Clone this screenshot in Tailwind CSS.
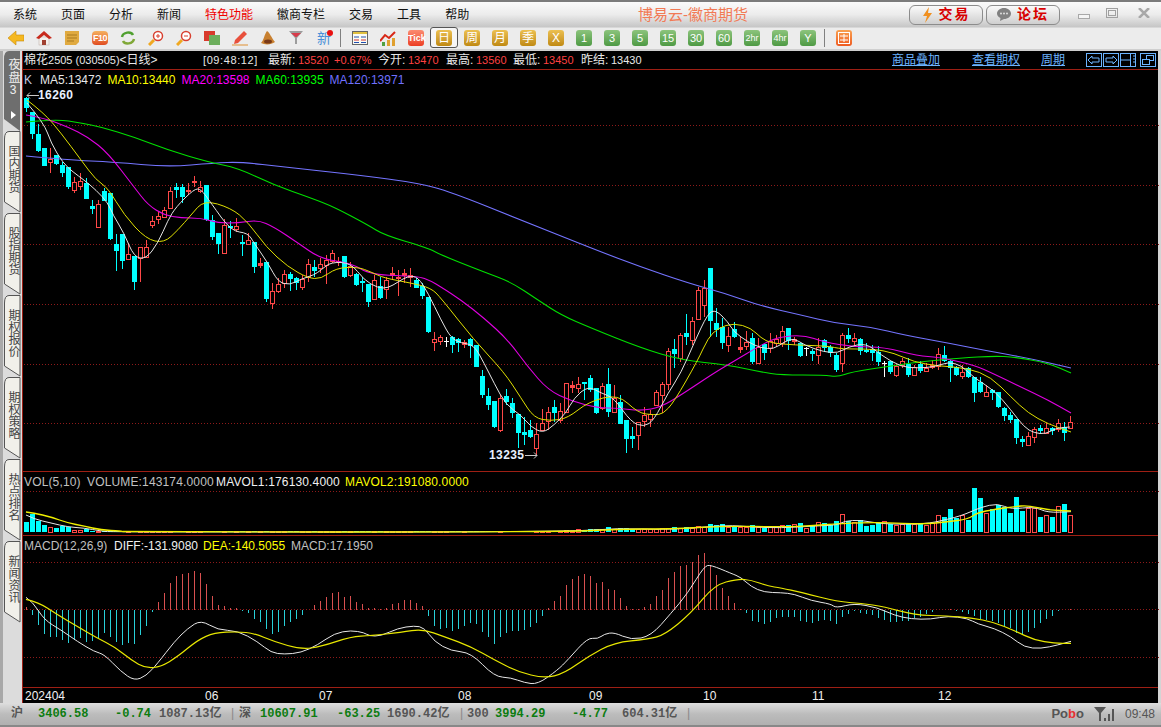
<!DOCTYPE html>
<html lang="zh-CN">
<head>
    <meta charset="UTF-8">
    <title>博易云-徽商期货</title>
    <script src="https://cdn.jsdelivr.net/npm/@tailwindcss/browser@4"></script>
</head>
<body class="h-screen overflow-hidden flex flex-col bg-[#d4d4d4] text-xs text-[#222] [font-family:'Liberation_Sans','Noto_Sans_CJK_SC',sans-serif]">

    <!-- Menu bar -->
    <div class="h-[27px] shrink-0 flex items-center border-t-2 border-[#7c7c7c] pl-[13px] bg-gradient-to-b from-[#fbfbfb] via-[#ececec] to-[#c6c6c6]">
        <div class="flex gap-[24px] w-[457px] text-[#111]">
            <span>系统</span><span>页面</span><span>分析</span><span>新闻</span>
            <span class="text-[#f00000]">特色功能</span>
            <span>徽商专栏</span><span>交易</span><span>工具</span><span>帮助</span>
        </div>
        <div class="ml-[168px] w-[271px] text-[15px] text-[#f27a55]">博易云-徽商期货</div>
        <button class="w-[74px] h-[20px] flex items-center justify-center gap-[6px] rounded-md border border-[#8c8c8c] bg-gradient-to-b from-[#fafafa] to-[#cfcfcf] text-[14px] font-bold text-[#d80000] tracking-[2px]">
            <svg class="w-[11px] h-[16px]" viewBox="0 0 11 16"><path d="M7 0 L1 9 H5 L3 16 L10 6 H6 Z" fill="#f09020"/></svg>交易
        </button>
        <button class="ml-[3px] w-[74px] h-[20px] flex items-center justify-center gap-[6px] rounded-md border border-[#8c8c8c] bg-gradient-to-b from-[#fafafa] to-[#cfcfcf] text-[14px] font-bold text-[#d80000] tracking-[2px]">
            <svg class="w-[14px] h-[13px]" viewBox="0 0 14 13"><path d="M7 0 C11 0 14 2.5 14 5.5 C14 8.5 11 11 7 11 L3 13 L3.5 10 C1.5 9 0 7.500 0 5.500 C0 2.500 3 0 7 0 Z" fill="#808080"/><circle cx="4" cy="5.500" r="1" fill="#ddd"/><circle cx="7" cy="5.500" r="1" fill="#ddd"/><circle cx="10" cy="5.500" r="1" fill="#ddd"/></svg>论坛
        </button>
        <div class="ml-[18px] flex items-center gap-[16px] h-full">
            <svg class="w-[12px] h-[6px] mt-[4px]" viewBox="0 0 12 6"><rect x="0.500" y="0.500" width="11" height="4" fill="#f4f4f4" stroke="#a8a8a8"/></svg>
            <svg class="w-[12px] h-[10px] -mt-[4px]" viewBox="0 0 12 10"><rect x="0.500" y="0.500" width="11" height="9" fill="none" stroke="#a0a0a0"/><rect x="2.500" y="2.500" width="7" height="5" fill="none" stroke="#a0a0a0"/></svg>
            <svg class="w-[12px] h-[10px] -mt-[4px] ml-[4px]" viewBox="0 0 12 10"><path d="M1 0 L11 10 M11 0 L1 10" stroke="#a8a8a8" stroke-width="2.500"/></svg>
        </div>
    </div>

    <!-- Toolbar -->
    <div class="h-[24px] shrink-0 flex items-center pl-[2px] pb-[2px] bg-[#ececec] border-t border-[#d8d8d8] border-b-2 border-b-[#cfcfcf]">
        <div class="w-[28px] flex justify-center"><svg class="w-4 h-4" viewBox="0 0 16 16"><path d="M0 8 L8 1 V5 H16 V11 H8 V15 Z" fill="#f5b820" stroke="#c8890c" stroke-width="0.600"/></svg></div>
        <div class="w-[28px] flex justify-center"><svg class="w-4 h-4" viewBox="0 0 16 16"><rect x="3" y="7" width="10" height="8" fill="#f4f0ec" stroke="#b8a8a0" stroke-width="0.500"/><rect x="6" y="10" width="4" height="5" fill="#a04030"/><path d="M0 8 L8 1 L16 8 L13 9 L8 5 L3 9 Z" fill="#c82a1c"/></svg></div>
        <div class="w-[28px] flex justify-center"><svg class="w-4 h-4" viewBox="0 0 16 16"><path d="M1 1 H15 V12 L12 15 H1 Z" fill="#e0aa40"/><path d="M3 5 H13 M3 8 H13 M3 11 H10" stroke="#a87a20"/></svg></div>
        <div class="w-[28px] flex justify-center"><div class="w-4 h-[14px] rounded-sm bg-gradient-to-b from-[#f4b060] to-[#e04a20] text-[9px] leading-[15px] tracking-tighter font-bold text-white text-center">F10</div></div>
        <div class="w-[28px] flex justify-center"><svg class="w-4 h-4" viewBox="0 0 16 16" fill="none"><path d="M2 7 C3 2 11 1 13 5" stroke="#50a030" stroke-width="2.500"/><path d="M14 9 C13 14 5 15 3 11" stroke="#80a838" stroke-width="2.500"/></svg></div>
        <div class="w-[28px] flex justify-center"><svg class="w-4 h-4" viewBox="0 0 16 16" fill="none"><path d="M1 15 L6 10" stroke="#f0a820" stroke-width="3"/><circle cx="10" cy="6" r="4.500" stroke="#d84030" stroke-width="1.500" fill="#fff"/><path d="M8 6 H12 M10 4 V8" stroke="#d84030"/></svg></div>
        <div class="w-[28px] flex justify-center"><svg class="w-4 h-4" viewBox="0 0 16 16" fill="none"><path d="M1 15 L6 10" stroke="#f0a820" stroke-width="3"/><circle cx="10" cy="6" r="4.500" stroke="#d84030" stroke-width="1.500" fill="#fff"/><path d="M8 6 H12" stroke="#d84030"/></svg></div>
        <div class="w-[28px] flex justify-center"><svg class="w-4 h-4" viewBox="0 0 16 16"><rect x="0" y="1" width="11" height="10" fill="#d83a2c"/><rect x="5" y="5" width="11" height="10" fill="#6cae5c"/></svg></div>
        <div class="w-[28px] flex justify-center"><svg class="w-4 h-4" viewBox="0 0 16 16"><path d="M3 10 L12 1 L15 4 L6 13 L2 14 Z" fill="#e8503c"/><path d="M0 15 H16" stroke="#e09030"/></svg></div>
        <div class="w-[28px] flex justify-center"><svg class="w-4 h-4" viewBox="0 0 16 16"><path d="M7 1 C10 3 11 7 15 12 C11 15 5 15 1 13 C4 10 4 5 7 1 Z" fill="#c88030"/><ellipse cx="8" cy="11.500" rx="4" ry="2" fill="#7a3a18"/></svg></div>
        <div class="w-[28px] flex justify-center"><svg class="w-4 h-4" viewBox="0 0 16 16"><path d="M1 1 H15 L9 8 V14 H7 V8 Z" fill="#9c9c9c"/><path d="M3 3 H13 L8.500 7 H7.500 Z" fill="#d83a4a"/></svg></div>
        <div class="w-[28px] flex justify-center relative"><span class="text-[14px] leading-4 text-[#4a90d8]">新</span><span class="absolute top-0 right-[5px] w-[6px] h-[6px] rounded-full bg-[#e81010]"></span></div>
        <div class="w-[8px] h-[18px] pl-[2px]"><div class="w-px h-full bg-[#808080]"></div></div>
        <div class="w-[28px] flex justify-center"><svg class="w-4 h-4" viewBox="0 0 16 16"><rect x="0.500" y="1.500" width="15" height="13" fill="#fbfbf4" stroke="#666"/><rect x="1" y="2" width="14" height="2" fill="#e0c040"/><path d="M2 7 H7 M9 7 H14" stroke="#2050b0"/><path d="M2 10 H7 M9 10 H14" stroke="#d03030"/><path d="M2 12.500 H7 M9 12.500 H14" stroke="#2050b0"/></svg></div>
        <div class="w-[28px] flex justify-center"><svg class="w-4 h-4" viewBox="0 0 16 16" fill="none"><path d="M0 11 L5 5 L9 8 L15 2" stroke="#d82818" stroke-width="2"/><rect x="2" y="12" width="3" height="4" fill="#50a040"/><rect x="7" y="10" width="3" height="6" fill="#e0a030"/><rect x="12" y="8" width="3" height="8" fill="#e0a030"/></svg></div>
        <div class="w-[28px] flex justify-center"><div class="w-4 h-4 rounded-[3px] bg-gradient-to-b from-[#fb8a70] to-[#ec3c20] text-[9px] leading-4 font-bold text-white text-center">Tick</div></div>
        <div class="w-[28px] h-[21px] flex items-center justify-center rounded-[3px] border border-[#555] bg-[#f6f6f6]"><div class="w-4 h-4 rounded-[3px] bg-gradient-to-b from-[#ecc050] to-[#c08a10] text-xs leading-4 text-white text-center">日</div></div>
        <div class="w-[28px] flex justify-center"><div class="w-4 h-4 rounded-[3px] bg-gradient-to-b from-[#ecc050] to-[#c08a10] text-xs leading-4 text-white text-center">周</div></div>
        <div class="w-[28px] flex justify-center"><div class="w-4 h-4 rounded-[3px] bg-gradient-to-b from-[#ecc050] to-[#c08a10] text-xs leading-4 text-white text-center">月</div></div>
        <div class="w-[28px] flex justify-center"><div class="w-4 h-4 rounded-[3px] bg-gradient-to-b from-[#ecc050] to-[#c08a10] text-xs leading-4 text-white text-center">季</div></div>
        <div class="w-[28px] flex justify-center"><div class="w-4 h-4 rounded-[3px] bg-gradient-to-b from-[#ecc050] to-[#c08a10] text-xs leading-4 text-white text-center">X</div></div>
        <div class="w-[28px] flex justify-center"><div class="w-4 h-4 rounded-[3px] bg-gradient-to-b from-[#8cc47c] to-[#4e9a44] text-[11px] leading-4 text-white text-center">1</div></div>
        <div class="w-[28px] flex justify-center"><div class="w-4 h-4 rounded-[3px] bg-gradient-to-b from-[#8cc47c] to-[#4e9a44] text-[11px] leading-4 text-white text-center">3</div></div>
        <div class="w-[28px] flex justify-center"><div class="w-4 h-4 rounded-[3px] bg-gradient-to-b from-[#8cc47c] to-[#4e9a44] text-[11px] leading-4 text-white text-center">5</div></div>
        <div class="w-[28px] flex justify-center"><div class="w-4 h-4 rounded-[3px] bg-gradient-to-b from-[#8cc47c] to-[#4e9a44] text-[11px] leading-4 text-white text-center">15</div></div>
        <div class="w-[28px] flex justify-center"><div class="w-4 h-4 rounded-[3px] bg-gradient-to-b from-[#8cc47c] to-[#4e9a44] text-[11px] leading-4 text-white text-center">30</div></div>
        <div class="w-[28px] flex justify-center"><div class="w-4 h-4 rounded-[3px] bg-gradient-to-b from-[#8cc47c] to-[#4e9a44] text-[11px] leading-4 text-white text-center">60</div></div>
        <div class="w-[28px] flex justify-center"><div class="w-4 h-4 rounded-[3px] bg-gradient-to-b from-[#8cc47c] to-[#4e9a44] text-[9px] leading-4 text-white text-center">2hr</div></div>
        <div class="w-[28px] flex justify-center"><div class="w-4 h-4 rounded-[3px] bg-gradient-to-b from-[#8cc47c] to-[#4e9a44] text-[9px] leading-4 text-white text-center">4hr</div></div>
        <div class="w-[28px] flex justify-center"><div class="w-4 h-4 rounded-[3px] bg-gradient-to-b from-[#8cc47c] to-[#4e9a44] text-[11px] leading-4 text-white text-center">Y</div></div>
        <div class="w-[8px] h-[18px] pl-[2px]"><div class="w-px h-full bg-[#808080]"></div></div>
        <div class="w-[28px] flex justify-center"><div class="w-4 h-4 rounded-[3px] bg-gradient-to-b from-[#f8a050] to-[#ee5a20] flex items-center justify-center"><svg class="w-3 h-3" viewBox="0 0 12 12" fill="none" stroke="#fff"><rect x="0.500" y="0.500" width="11" height="11"/><path d="M2 4 H10 M2 8 H10 M6 2 V10"/></svg></div></div>
    </div>

    <!-- Body -->
    <div class="flex-1 min-h-0 flex">

        <!-- Side tabs -->
        <div class="w-[22px] shrink-0 bg-[#dcdcdc] border-l-[3px] border-[#a8a8a8]">
            <div class="relative h-[80px] pl-[4px] pt-[7px] text-[#eee]">
                <svg class="absolute inset-0 w-[19px] h-[82px]" viewBox="0 0 19 82"><path d="M1 8 Q1 0 6 0 H17 V80 L1 68 Z" fill="#6e6e6e"/></svg>
                <div class="relative w-[12px] [writing-mode:vertical-rl] text-xs leading-[12px] tracking-[1px]">夜盘</div>
                <div class="relative w-[12px] text-center leading-[12px]">3</div>
                <svg class="absolute left-[8px] top-[60px] w-[5px] h-[8px]" viewBox="0 0 5 8"><path d="M0 0 L5 4 L0 8 Z" fill="#fff"/></svg>
            </div>
            <div class="relative h-[82px] pl-[4px] pt-[14px] text-[#444]">
                <svg class="absolute inset-0 w-[19px] h-[82px]" viewBox="0 0 19 82"><path d="M1.500 8 Q1.500 0.500 6 0.500 H17 V81 L1.500 71 Z" fill="#f1f0ea" stroke="#555"/></svg>
                <div class="relative w-[12px] [writing-mode:vertical-rl] text-xs leading-[12px]">国内期货</div>
            </div>
            <div class="relative h-[82px] pl-[4px] pt-[14px] text-[#444]">
                <svg class="absolute inset-0 w-[19px] h-[82px]" viewBox="0 0 19 82"><path d="M1.500 8 Q1.500 0.500 6 0.500 H17 V81 L1.500 71 Z" fill="#f1f0ea" stroke="#555"/></svg>
                <div class="relative w-[12px] [writing-mode:vertical-rl] text-xs leading-[12px]">股指期货</div>
            </div>
            <div class="relative h-[82px] pl-[4px] pt-[14px] text-[#444]">
                <svg class="absolute inset-0 w-[19px] h-[82px]" viewBox="0 0 19 82"><path d="M1.500 8 Q1.500 0.500 6 0.500 H17 V81 L1.500 71 Z" fill="#f1f0ea" stroke="#555"/></svg>
                <div class="relative w-[12px] [writing-mode:vertical-rl] text-xs leading-[12px]">期权报价</div>
            </div>
            <div class="relative h-[82px] pl-[4px] pt-[14px] text-[#444]">
                <svg class="absolute inset-0 w-[19px] h-[82px]" viewBox="0 0 19 82"><path d="M1.500 8 Q1.500 0.500 6 0.500 H17 V81 L1.500 71 Z" fill="#f1f0ea" stroke="#555"/></svg>
                <div class="relative w-[12px] [writing-mode:vertical-rl] text-xs leading-[12px]">期权策略</div>
            </div>
            <div class="relative h-[82px] pl-[4px] pt-[14px] text-[#444]">
                <svg class="absolute inset-0 w-[19px] h-[82px]" viewBox="0 0 19 82"><path d="M1.500 8 Q1.500 0.500 6 0.500 H17 V81 L1.500 71 Z" fill="#f1f0ea" stroke="#555"/></svg>
                <div class="relative w-[12px] [writing-mode:vertical-rl] text-xs leading-[12px]">热点排名</div>
            </div>
            <div class="relative h-[82px] pl-[4px] pt-[14px] text-[#444]">
                <svg class="absolute inset-0 w-[19px] h-[82px]" viewBox="0 0 19 82"><path d="M1.500 8 Q1.500 0.500 6 0.500 H17 V81 L1.500 71 Z" fill="#f1f0ea" stroke="#555"/></svg>
                <div class="relative w-[12px] [writing-mode:vertical-rl] text-xs leading-[12px]">新闻资讯</div>
            </div>
        </div>

        <!-- Chart area -->
        <div class="relative w-[1136px] shrink-0 flex flex-col bg-black border-l border-[#9e1f14]">
            <div class="h-[19px] shrink-0 flex items-center pl-[1px] border-b border-[#9e1f14] text-[#e8e8e8] text-[11px]">
                <span class="w-[179px] text-xs">棉花<span class="text-[11px]">2505 (030505)</span>&lt;日线&gt;</span>
                <span class="w-[65px] tracking-[0.6px]">[09:48:12]</span>
                <span class="w-[30px] text-xs">最新:</span><span class="text-[#ff4040] w-[36px]">13520</span>
                <span class="text-[#ff4040] w-[44px]">+0.67%</span>
                <span class="w-[30px] text-xs">今开:</span><span class="text-[#ff4040] w-[38px]">13470</span>
                <span class="w-[30px] text-xs">最高:</span><span class="text-[#ff4040] w-[37px]">13560</span>
                <span class="w-[30px] text-xs">最低:</span><span class="text-[#ff4040] w-[38px]">13450</span>
                <span class="w-[30px] text-xs">昨结:</span><span>13430</span>
                <span class="ml-auto text-[#6cb4ff] underline text-xs">商品叠加</span>
                <span class="ml-[32px] text-[#6cb4ff] underline text-xs">查看期权</span>
                <span class="ml-[21px] text-[#6cb4ff] underline text-xs">周期</span>
                <div class="ml-[21px] mr-[2px] flex gap-px">
                    <svg class="w-[16px] h-[14px]" viewBox="0 0 16 14" fill="none" stroke="#6cb4ff"><rect x="0.500" y="0.500" width="15" height="13"/><path d="M2 7 L6 3 V5 H13 V9 H6 V11 Z"/></svg>
                    <svg class="w-[16px] h-[14px]" viewBox="0 0 16 14" fill="none" stroke="#6cb4ff"><rect x="0.500" y="0.500" width="15" height="13"/><path d="M14 7 L10 3 V5 H3 V9 H10 V11 Z"/></svg>
                    <svg class="w-[16px] h-[14px]" viewBox="0 0 16 14" fill="none" stroke="#6cb4ff"><rect x="0.500" y="0.500" width="15" height="13"/><path d="M1 7 H10 M10.500 1 V13 M13 3 H15 M13 6 H15 M13 9 H15"/></svg>
                    <svg class="ml-[3px] w-[16px] h-[14px]" viewBox="0 0 16 14" fill="none" stroke="#6cb4ff"><rect x="0.500" y="0.500" width="15" height="13"/><rect x="6.500" y="2.500" width="7" height="5"/><rect x="2.500" y="6.500" width="7" height="5" fill="#000"/></svg>
                </div>
            </div>
            <div class="h-[401px] shrink-0 pl-[1px] pt-[2px] flex gap-[6px] leading-[16px]">
                <span class="text-[#c0c8e0] w-[10px]">K</span>
                <span class="text-[#e8e8e8]">MA5:13472</span>
                <span class="text-[#ffff00]">MA10:13440</span>
                <span class="text-[#ff00ff]">MA20:13598</span>
                <span class="text-[#00ff00]">MA60:13935</span>
                <span class="text-[#7070ff]">MA120:13971</span>
            </div>
            <div class="h-[64px] shrink-0 pl-[1px] pt-[2px] flex tracking-[0.15px] border-t border-[#9e1f14] leading-[16px]">
                <span class="w-[63px] text-[#c0c0c0]">VOL(5,10)</span>
                <span class="w-[129px] text-[#c0c0c0]">VOLUME:143174.0000</span>
                <span class="w-[129px] text-[#f0f0f0]">MAVOL1:176130.4000</span>
                <span class="text-[#ffff00]">MAVOL2:191080.0000</span>
            </div>
            <div class="h-[152px] shrink-0 pl-[1px] pt-[2px] flex border-t border-[#9e1f14] leading-[16px]">
                <span class="w-[90px] text-[#c0c0c0]">MACD(12,26,9)</span>
                <span class="w-[89px] text-[#f0f0f0]">DIFF:-131.9080</span>
                <span class="w-[88px] text-[#ffff00]">DEA:-140.5055</span>
                <span class="text-[#c0c0c0]">MACD:17.1950</span>
            </div>
            <div class="flex-1 border-t border-[#9e1f14]"></div>
            <!-- candles and indicator lines are drawn into this one -->
            <svg id="chart" class="absolute inset-0 w-[1136px] h-[652px]" viewBox="22 51 1136 652"></svg>
        </div>
    </div>

    <!-- Status bar -->
    <div class="h-[24px] shrink-0 flex items-center pl-[11px] bg-gradient-to-b from-[#dedede] via-[#bcbcbc] to-[#b0b0b0] border-b-2 border-[#888] [font-family:'Liberation_Mono','Noto_Sans_CJK_SC',monospace] font-bold text-[#555]">
        <span class="w-[27px]">沪</span>
        <span class="w-[77px] text-[#0c7c10]">3406.58</span>
        <span class="w-[44px] text-[#0c7c10]">-0.74</span>
        <span class="w-[70px]">1087.13亿</span>
        <span class="w-[10px] font-normal text-[#888]">|</span>
        <span class="w-[21px]">深</span>
        <span class="w-[77px] text-[#0c7c10]">10607.91</span>
        <span class="w-[50px] text-[#0c7c10]">-63.25</span>
        <span class="w-[71px]">1690.42亿</span>
        <span class="w-[9px] font-normal text-[#888]">|</span>
        <span class="w-[28px]">300</span>
        <span class="w-[77px] text-[#0c7c10]">3994.29</span>
        <span class="w-[50px] text-[#0c7c10]">-4.77</span>
        <span class="w-[63px]">604.31亿</span>
        <span class="font-normal text-[#888]">|</span>
        <span class="ml-auto text-[13px] text-[#555] [font-family:'Liberation_Sans',sans-serif]">Po<span class="text-[#e83030]">b</span>o</span>
        <svg class="ml-[10px] w-[22px] h-[14px]" viewBox="0 0 22 14"><path d="M0 0 H12 L7 6 V14 H5 V6 Z" fill="#555"/><rect x="10" y="11" width="2" height="3" fill="#555"/><rect x="14" y="7" width="2" height="7" fill="#555"/><rect x="18" y="2" width="2" height="12" fill="#555"/></svg>
        <span class="ml-[9px] mr-[6px] font-normal text-[#555] [font-family:'Liberation_Sans',sans-serif]">09:48</span>
    </div>

    <script>
        // [colour, body top, body bottom, high, low]  c = cyan (down), r = red (up), w = white doji
        const candles = [
            ['c',98,108,97,112],['c',112,134,112,139],['c',134,151,124,152],['c',148,166,148,166],['r',159,162,148,173],
            ['c',155,164,155,165],['c',165,173,162,177],['c',167,187,167,189],['r',182,190,177,193],['r',181,186,173,190],
            ['c',183,199,178,199],['c',206,209,200,214],['r',204,227,200,227],['c',191,201,188,201],['c',193,239,193,240],
            ['c',244,251,234,271],['c',234,261,234,269],['r',254,259,243,259],['c',256,282,256,290],['r',247,258,247,282],
            ['r',247,257,240,257],['r',221,225,216,228],['r',216,219,212,224],['r',210,217,207,217],['r',191,208,187,208],
            ['c',187,190,183,198],['c',187,197,184,203],['r',190,191,183,195],['r',181,182,176,187],['r',187,191,181,193],
            ['c',185,220,185,221],['c',220,237,215,240],['c',233,244,233,254],['r',225,253,219,253],['c',226,228,221,238],
            ['r',226,229,218,232],['c',242,244,235,256],['r',240,244,233,244],['c',242,267,242,273],['r',263,265,258,268],
            ['c',262,299,262,302],['r',291,303,283,309],['r',284,291,278,293],['r',274,283,270,288],['c',274,279,272,291],
            ['c',278,283,277,290],['r',279,287,275,290],['r',264,277,259,282],['c',267,271,260,277],['r',264,268,258,273],
            ['r',260,265,255,284],['r',253,261,250,263],['r',261,262,257,266],['c',256,277,256,278],['r',266,275,262,277],
            ['c',274,285,273,286],['c',281,283,277,292],['c',284,302,284,307],['r',280,299,275,299],['c',286,298,277,299],
            ['r',280,289,277,299],['r',273,275,267,280],['r',277,278,270,296],['r',273,275,269,283],['r',275,277,268,287],
            ['c',280,288,278,288],['c',286,296,283,299],['c',297,332,297,333],['r',339,342,332,351],['r',337,341,335,345],
            ['w',341,341,337,347],['c',337,345,336,353],['c',339,343,338,352],['r',342,344,340,348],['c',339,346,338,358],
            ['c',345,367,345,367],['c',376,395,370,398],['c',396,405,388,410],['c',401,427,401,428],['r',398,430,395,432],
            ['c',396,402,389,405],['c',403,413,398,418],['c',414,433,414,448],['c',432,435,417,445],['c',430,437,420,438],
            ['r',434,448,423,456],['r',423,430,409,431],['r',412,421,407,430],['c',407,413,400,422],['r',411,420,403,423],
            ['r',383,412,383,413],['r',385,387,381,393],['r',384,388,377,393],['c',382,384,382,400],['c',378,390,375,392],
            ['c',388,413,388,414],['r',386,408,383,410],['c',384,412,368,417],['r',398,412,385,413],['c',402,424,395,424],
            ['c',420,439,420,453],['c',436,439,427,448],['r',422,435,422,450],['r',415,421,407,427],['r',414,419,410,427],
            ['r',392,405,390,405],['r',384,395,382,413],['r',351,384,348,390],['c',349,354,339,368],['r',335,358,333,362],
            ['c',333,337,314,345],['r',321,340,317,345],['r',290,319,287,320],['r',288,305,280,317],['c',268,321,268,337],
            ['c',323,330,308,337],['c',327,343,318,349],['r',336,345,327,352],['c',329,337,322,338],['r',347,349,337,353],
            ['r',342,346,331,350],['c',338,362,333,364],['r',347,363,338,364],['c',344,353,344,360],['r',341,348,333,353],
            ['r',339,343,335,347],['r',331,343,326,347],['c',328,341,328,350],['r',339,341,337,345],['c',343,356,343,357],
            ['w',348,348,347,356],['c',351,354,349,361],['r',347,355,338,364],['c',340,348,339,352],['c',347,353,345,357],
            ['c',355,370,353,372],['r',335,363,333,372],['c',335,339,328,343],['r',338,341,333,347],['c',339,351,338,355],
            ['c',350,352,343,353],['c',349,353,345,361],['c',352,362,346,366],['w',363,363,361,377],['c',361,372,361,374],
            ['r',366,375,364,377],['r',361,365,358,368],['c',364,375,358,377],['r',367,375,365,376],['c',364,371,361,373],
            ['r',368,371,363,372],['r',365,367,360,369],['r',354,366,348,370],['c',355,361,346,362],['c',361,368,360,382],
            ['c',367,375,366,376],['r',372,376,365,379],['c',368,377,367,378],['c',377,393,377,402],['c',382,392,377,393],
            ['r',392,396,385,397],['c',390,393,389,400],['c',392,407,392,408],['c',408,416,407,421],['c',415,420,412,423],
            ['c',419,438,419,444],['c',439,442,436,447],['r',436,445,432,446],['r',429,437,427,443],['c',428,431,425,433],
            ['r',428,433,423,434],['c',428,431,427,435],['r',423,429,419,432],['c',427,433,422,441],['r',422,428,416,429]
        ];

        // VOL bar tops; the left part reads directly in y, the rest in zoom units below
        const volTops = [522,514,521,525,527,528,526,527,530,530,529];
        while (volTops.length < 90) volTops.push(531);
        [210,214,208,209,208,208,208,201,207,204,205,207,207,208,208,207,205,204,201,204,202,204,199,200,192,196,192,200,199,202,202,195,200,204,202,202,
         196,196,192,189,204,195,186,189,195,183,162,182,185,180,198,195,190,183,192,195,192,190,192,190,195,190,165,171,147,175,165,180,84,114,158,147,135,140,159,111,153,144,144,171,165,171,138,132,165]
            .forEach(v => volTops.push(460 + v / 3));

        // MACD bar ends, 3x units from y=460
        const macdEnds = [441,465,495,522,532,530,540,548,540,535,545,542,535,520,532,545,555,550,553,525,498,456,427,398,368,347,342,338,333,338,372,407,435,438,443,445,452,458,478,487,508,522,515,498,486,478,
            465,449,435,423,412,399,395,411,407,426,432,445,444,446,444,432,428,420,420,429,437,468,498,508,505,512,507,497,488,493,515,532,552,532,518,512,512,510,500,488,467,443,422,407,375,357,348,342,348,368,365,388,390,414,438,448,446,441,432,408,390,353,335,318,315,305,284,278,315,345,384,408,429,448,460,482,485,491,485,475,
            470,470,470,483,487,488,482,480,483,492,472,461,453,460,462,465,473,480,487,486,483,482,473,470,463,455,449,449,447,452,457,462,468,477,481,483,490,498,505,518,522,515,504,488,477,467,453,450,447,452,438].slice(0, 175);

        const ma5 = [[26,103],[43,123],[50,143],[62,163],[72,172],[83,180],[95,190],[107,203],[112,215],[123,233],[133,257],[145,259],[157,243],[167,220],[175,207],[193,189],[200,189],[210,203],[230,231],[247,233],[253,243],[267,263],[277,282],[289,285],[300,279],[313,275],[320,270],[330,262],[350,263],[363,280],[377,288],[387,288],[397,282],[407,276],[417,277],[427,293],[440,320],[450,338],[460,343],[473,345],[483,363],[493,383],[505,405],[520,415],[530,427],[542,433],[553,425],[565,413],[573,398],[587,386],[600,393],[613,398],[630,422],[643,427],[653,420],[667,393],[680,373],[693,343],[707,313],[715,310],[727,322],[733,332],[747,342],[760,348],[773,349],[783,342],[793,338],[803,345],[823,352],[837,353],[847,347],[865,343],[880,355],[900,367],[917,368],[933,367],[947,362],[960,365],[973,378],[993,390],[1010,410],[1023,427],[1033,433],[1045,434],[1055,428],[1069,427]];
        const ma10 = [[26,100],[43,113],[60,133],[80,160],[95,180],[107,188],[123,215],[145,239],[163,243],[177,230],[190,215],[203,200],[230,208],[247,222],[265,247],[287,267],[307,278],[320,279],[335,268],[357,267],[370,272],[383,278],[410,283],[430,288],[440,298],[473,340],[503,372],[520,398],[533,418],[550,421],[567,418],[587,402],[617,394],[637,413],[653,415],[662,414],[673,402],[697,360],[707,338],[717,328],[733,323],[750,328],[760,338],[770,343],[793,345],[827,346],[840,349],[873,349],[893,353],[913,362],[937,366],[967,368],[990,377],[1010,397],[1027,413],[1047,424],[1070,432]];
        const ma20 = [[25,115],[43,118],[67,127],[87,137],[107,153],[133,187],[147,205],[163,215],[180,218],[200,218],[217,223],[237,223],[257,220],[273,227],[297,243],[320,259],[350,263],[370,275],[417,276],[430,281],[440,287],[460,300],[483,318],[507,340],[527,367],[547,390],[570,401],[597,408],[617,408],[640,411],[660,407],[680,395],[713,373],[730,363],[760,345],[777,337],[803,335],[823,342],[853,347],[883,347],[917,356],[937,357],[973,365],[993,374],[1020,387],[1047,400],[1070,413]];
        const ma60 = [[25,122],[55,119],[80,123],[100,127],[133,137],[167,150],[207,162],[237,168],[273,185],[310,198],[333,207],[367,225],[383,235],[427,248],[440,255],[483,272],[510,282],[537,300],[560,315],[590,328],[640,348],[680,360],[727,365],[760,372],[780,375],[823,375],[837,377],[850,372],[890,366],[917,362],[960,358],[993,356],[1013,357],[1047,363],[1070,373]];
        const ma120 = [[25,156],[67,160],[113,162],[167,167],[213,163],[240,162],[283,167],[357,175],[417,183],[450,192],[520,220],[595,250],[640,267],[687,283],[723,293],[760,306],[800,315],[833,323],[870,327],[903,335],[947,343],[987,351],[1027,358],[1070,368]];

        // lower panes were read off 3x crops: [x0, [v, v, ...]] pairs turn into page coords
        const fromZoom = (x0, pts) => pts.map(p => [x0 + p[0] / 3, 460 + p[1] / 3]);
        const vol1 = [[25,515],[33,519],[50,523],[67,527],[83,528],[100,531],[110,532],[565,532],[617,528],[667,530],[727,525],[750,527],[780,528]].concat(
            fromZoom(780, [[100,198],[170,195],[190,183],[240,180],[300,192],[430,193],[500,178],[540,167],[570,155],[600,142],[650,130],[690,148],[760,140],[800,158],[870,155]]));
        const vol2 = [[25,512],[33,513],[50,517],[67,523],[83,526],[100,530],[120,531],[123,532],[565,532],[617,529],[667,529],[727,526],[780,527]].concat(
            fromZoom(780, [[100,197],[180,190],[300,187],[430,193],[500,185],[560,178],[590,158],[640,148],[700,140],[740,136],[800,150],[870,153]]));
        const diff = fromZoom(0, [[75,412],[95,425],[130,480],[180,510],[230,545],[280,575],[310,583],[360,635],[400,662],[435,648],[470,610],[520,545],[560,505],[600,480],[650,510],[710,512],[770,545],[810,578],[850,583],[900,578]]).concat(
            fromZoom(300, [[50,555],[100,520],[150,511],[190,518],[205,528],[240,528],[290,505],[340,497],[370,503],[400,545],[450,573],[510,578],[580,650],[630,653],[670,668],[710,673],[770,630],[800,600],[860,533],[890,537],[910,522],[940,517],[990,540],[1050,528],[1110,460],[1160,400],[1210,318],[1230,315],[1290,340],[1320,352],[1350,380],[1390,397],[1440,398]]),
            fromZoom(780, [[40,402],[90,422],[150,432],[165,444],[220,430],[290,443],[340,466],[390,477],[450,478],[500,468],[560,475],[590,492],[640,505],[690,530],[730,562],[780,566],[830,555],[870,544]]));
        const dea = fromZoom(0, [[75,418],[110,425],[170,465],[230,500],[290,535],[340,560],[390,600],[435,625],[480,620],[530,590],[590,540],[640,518],[710,515],[760,520],[820,545],[900,568]]).concat(
            fromZoom(300, [[60,560],[150,530],[210,527],[300,517],[365,507],[430,530],[510,560],[580,600],[650,635],[730,655],[790,640],[860,590],[940,547],[1040,538],[1090,525],[1170,460],[1240,375],[1310,357],[1350,360],[1400,378],[1440,384]]),
            fromZoom(780, [[60,397],[170,425],[240,430],[310,440],[400,465],[500,468],[570,473],[640,487],[700,512],[760,540],[820,550],[870,550]]));

        const RED = '#ff4848', CYAN = '#00ffff';
        let out = '';

        // dotted grid
        [125,185,244,304,364,423,491,562,609,657].forEach(y => {
            out += `<line x1="23" x2="1158" y1="${y + .5}" y2="${y + .5}" stroke="#8e1a1a" stroke-dasharray="1 2"/>`;
        });

        // candles + vol bars + macd bars
        let bars = '';
        candles.forEach((k, i) => {
            const [col, top, bot, hi, lo] = k;
            const cx = 25 + 6 * i, mid = cx + .5;
            if (col === 'c') {
                bars += `<line x1="${mid}" x2="${mid}" y1="${hi}" y2="${lo}" stroke="${CYAN}"/><rect x="${cx - 2}" y="${top}" width="5" height="${bot - top}" fill="${CYAN}"/>`;
            } else if (col === 'w') {
                bars += `<line x1="${mid}" x2="${mid}" y1="${hi}" y2="${lo}" stroke="#fff"/><line x1="${cx - 2}" x2="${cx + 3}" y1="${top + .5}" y2="${top + .5}" stroke="#fff"/>`;
            } else {
                const thin = bot - top <= 2;
                bars += `<line x1="${mid}" x2="${mid}" y1="${hi}" y2="${lo}" stroke="${RED}"/><rect x="${cx - 1.5}" y="${top + .5}" width="4" height="${bot - top}" fill="${thin ? RED : '#000'}" stroke="${RED}"/>`;
            }
            const vt = Math.round(volTops[i]);
            if (col === 'c') bars += `<rect x="${cx - 2}" y="${vt}" width="5" height="${532 - vt}" fill="${CYAN}"/>`;
            else bars += `<rect x="${cx - 1.5}" y="${vt + .5}" width="4" height="${Math.max(531.5 - vt, 1)}" fill="#000" stroke="${RED}"/>`;
            const me = 460 + macdEnds[i] / 3;
            bars += `<line x1="${mid}" x2="${mid}" y1="609.500" y2="${me}" stroke="${me < 609.5 ? '#d85050' : '#28d0d8'}"/>`;
        });
        out += `<g shape-rendering="crispEdges">${bars}</g>`;

        // rounds the corners between the points read off the picture
        const line = (pts, color, w) => {
            let d = `M${pts[0][0]} ${pts[0][1]}`;
            for (let i = 1; i < pts.length - 1; i++) {
                const mx = (pts[i][0] + pts[i + 1][0]) / 2, my = (pts[i][1] + pts[i + 1][1]) / 2;
                d += ` Q${pts[i][0]} ${pts[i][1]} ${mx} ${my}`;
            }
            const last = pts[pts.length - 1];
            d += ` L${last[0]} ${last[1]}`;
            return `<path d="${d}" fill="none" stroke="${color}" stroke-width="${w}"/>`;
        };
        out += line(ma120, '#7474ff', 1.1) + line(ma60, '#00e000', 1.1) + line(ma20, '#e000e0', 1.1) + line(ma10, '#e0e000', 1) + line(ma5, '#e4e4e4', 1);
        out += line(vol1, '#e8e8e8', 1) + line(vol2, '#f0f000', 1.3);
        out += line(diff, '#e8e8e8', 1) + line(dea, '#e8e800', 1.2);

        // high / low marks
        const label = 'font-family="Liberation Sans" font-size="12" font-weight="bold" fill="#e8f0ff" letter-spacing="0.4"';
        out += `<path d="M26 95.500 H38 M26 95.500 L29 92.500 M26 95.500 L29 98.500" stroke="#c8c8c8" fill="none"/><text x="37" y="99" ${label}>16260</text>`;
        out += `<text x="488" y="459" ${label}>13235</text><path d="M524 455.500 H536 M536 455.500 L533 452.500 M536 455.500 L533 458.500" stroke="#c8c8c8" fill="none"/>`;

        // month axis
        [['202404',24],['06',204],['07',318],['08',457],['09',588],['10',702],['11',811],['12',937]].forEach(m => {
            out += `<text x="${m[1]}" y="700" font-family="Liberation Sans" font-size="12" fill="#f0f0f0">${m[0]}</text>`;
        });

        document.getElementById('chart').innerHTML = out;
    </script>
</body>
</html>
